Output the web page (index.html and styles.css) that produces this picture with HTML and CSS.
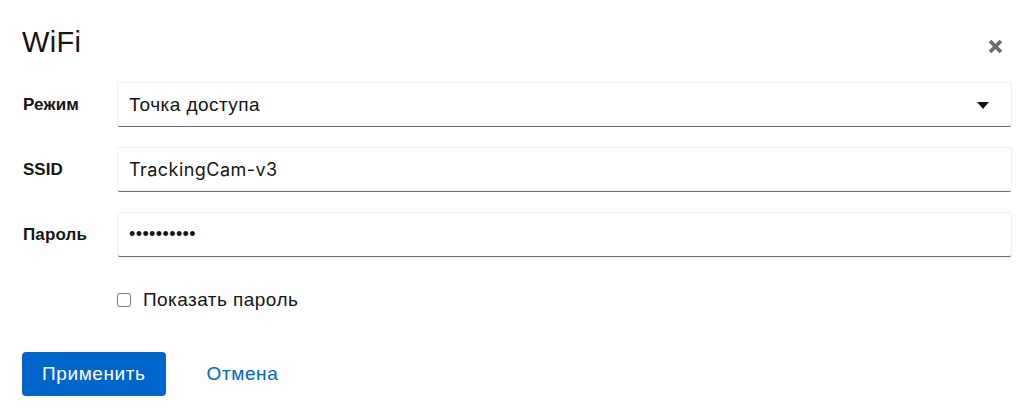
FILE: index.html
```html
<!DOCTYPE html>
<html lang="ru">
<head>
<meta charset="utf-8">
<title>WiFi</title>
<link rel="stylesheet" href="styles.css">
</head>
<body>
<div class="modal">
  <header class="modal-header">
    <h1 class="modal-title">WiFi</h1>
    <button class="close-btn" type="button" aria-label="Закрыть">
      <svg width="15" height="15" viewBox="0 0 15 15" aria-hidden="true">
        <path d="M2 2 L13 13 M13 2 L2 13" stroke="#6a6e73" stroke-width="3.8" stroke-linecap="butt"/>
      </svg>
    </button>
  </header>
  <form class="form">
    <label class="form-label">Режим</label>
    <div class="control select">
      <span class="select-text">Точка доступа</span>
      <svg class="caret" width="12" height="7" viewBox="0 0 12 7" aria-hidden="true"><path d="M0 0 H12 L6 7 Z" fill="#151515"/></svg>
    </div>

    <label class="form-label label-latin">SSID</label>
    <input class="control text-input latin" type="text" value="TrackingCam-v3">

    <label class="form-label">Пароль</label>
    <input class="control text-input pass" type="password" value="1234567890">

    <div class="check-row">
      <input class="checkbox" type="checkbox" id="show">
      <label class="check-label" for="show">Показать пароль</label>
    </div>
  </form>
  <footer class="modal-footer">
    <button class="btn-primary" type="button">Применить</button>
    <button class="btn-link" type="button">Отмена</button>
  </footer>
</div>
</body>
</html>
```

FILE: styles.css
```css
* { box-sizing: border-box; }
html, body { margin: 0; padding: 0; background: #ffffff; }
body {
  font-family: "Liberation Sans", Arial, sans-serif;
  color: #151515;
}
.modal {
  padding: 24px 23px 0 22px;
}
.modal-header {
  display: flex;
  justify-content: space-between;
  align-items: flex-start;
}
.modal-title {
  margin: 0;
  font-size: 29px;
  font-weight: 400;
  line-height: 36px;
  letter-spacing: 0.3px;
}
.close-btn {
  border: 0;
  background: transparent;
  padding: 0;
  margin: 15px 9px 0 0;
  width: 15px;
  height: 15px;
  display: flex;
}
.form {
  margin-top: 22px;
  display: grid;
  grid-template-columns: 95px 1fr;
  grid-auto-rows: 45px;
  row-gap: 20px;
  align-items: center;
}
.form-label {
  font-size: 17px;
  font-weight: 700;
  padding-left: 1px;
  letter-spacing: 0.15px;
}
.label-latin { letter-spacing: 0; }
.control {
  height: 45px;
  width: 100%;
  border: 1px solid #f0f0f0;
  border-bottom-color: #6a6e73;
  border-radius: 3px;
  background: #fff;
  font-family: "Liberation Sans", Arial, sans-serif;
  font-size: 19px;
  letter-spacing: 0.45px;
  color: #151515;
  padding: 0 11px;
  margin: 0;
  outline: none;
}
.select {
  display: flex;
  align-items: center;
  justify-content: space-between;
  padding-right: 22px;
}
.caret { display: block; margin-top: 1px; }
.latin {
  font-family: "Inter", "Liberation Sans", sans-serif;
  font-size: 18px;
  letter-spacing: 0.45px;
}
.pass { font-size: 18px; letter-spacing: 0.4px; }
.check-row {
  grid-column: 2;
  display: flex;
  align-items: center;
  gap: 12px;
}
.checkbox {
  width: 14px;
  height: 14px;
  margin: 0;
}
.check-label {
  font-size: 19px;
  letter-spacing: 0.45px;
}
.modal-footer {
  margin-top: 30px;
  display: flex;
  align-items: center;
  gap: 17px;
}
.btn-primary {
  background: #0066cc;
  color: #fff;
  border: 0;
  border-radius: 4px;
  height: 44px;
  padding: 0 20px 0 20px;
  font-family: "Liberation Sans", Arial, sans-serif;
  font-size: 19px;
  letter-spacing: 0.6px;
}
.btn-link {
  background: transparent;
  border: 0;
  color: #0066cc;
  height: 44px;
  padding: 0 24px;
  font-family: "Liberation Sans", Arial, sans-serif;
  font-size: 19px;
  letter-spacing: 0.6px;
}
```
